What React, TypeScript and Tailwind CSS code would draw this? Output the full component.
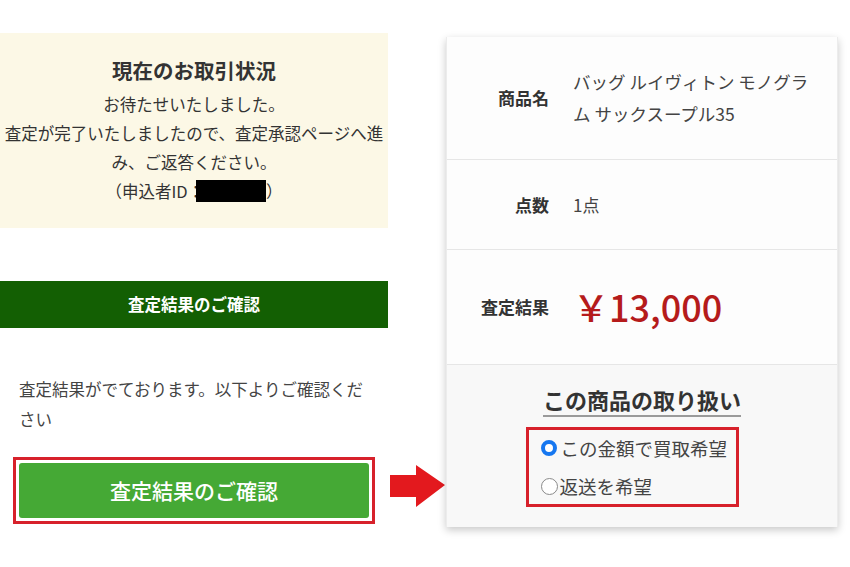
const font = { fontFamily: '"Noto Sans CJK JP", "Noto Sans", sans-serif' };

function Row({ label, children, className }: { label: string; children: React.ReactNode; className: string }) {
  return (
    <div className={`flex items-center border-b border-[#e6e6e6] ${className}`}>
      <div className="w-[102px] shrink-0 text-right text-[17px] font-bold text-[#333]">{label}</div>
      <div className="ml-[24px] w-[252px]">{children}</div>
    </div>
  );
}

export default function App() {
  return (
    <div className="w-[850px] h-[567px] bg-white flex items-start text-[#333]" style={font}>
      {/* left column */}
      <div className="w-[388px] shrink-0 pt-[33px]">
        <div className="h-[195px] bg-[#fcf8e6] flex flex-col items-center justify-center text-center">
          <h2 className="text-[20.5px] font-bold leading-[28px] mb-[6px]">現在のお取引状況</h2>
          <p className="text-[16.5px] leading-[29px]">お待たせいたしました。</p>
          <p className="text-[16.5px] leading-[29px] px-[3px]">
            査定が完了いたしましたので、査定承認ページへ進み、ご返答ください。
          </p>
          <p className="text-[16.5px] leading-[29px] flex items-center">
            （申込者ID：<span className="inline-block w-[70px] h-[22px] bg-black -ml-[8px]"></span>）
          </p>
        </div>

        <div className="mt-[53px] h-[47px] bg-[#135f03] flex items-center justify-center text-white text-[16.5px] font-bold">
          査定結果のご確認
        </div>

        <p className="mt-[46px] px-[19px] text-[16.5px] leading-[30px] text-[#444]">
          査定結果がでております。以下よりご確認ください
        </p>

        <div className="mt-[23px] ml-[13px] w-[362px] h-[67px] border-[3px] border-[#d7212b] p-[3px]">
          <div className="h-full bg-[#45a935] rounded-[3px] flex items-center justify-center text-white text-[21px] font-medium">
            査定結果のご確認
          </div>
        </div>
      </div>

      {/* arrow */}
      <div className="w-[58px] self-stretch flex flex-col justify-end pb-[60px] pl-[2px]">
        <svg width="56" height="42" viewBox="0 0 56 42">
          <path d="M0 10 H26 V0 L55 20 L26 42 V32 H0 Z" fill="#e3191e" />
        </svg>
      </div>

      {/* result card */}
      <div className="mt-[37px] w-[392px] bg-[#fdfdfd] shadow-[0_3px_8px_rgba(0,0,0,0.22)] border-x border-[#ececec]">
        <Row label="商品名" className="h-[123px]">
          <p className="text-[17.5px] leading-[32px] text-[#444]">バッグ ルイヴィトン モノグラム サックスープル35</p>
        </Row>
        <Row label="点数" className="h-[90px]">
          <p className="text-[17px] text-[#444]">1点</p>
        </Row>
        <Row label="査定結果" className="h-[115px]">
          <p className="text-[36px] leading-none text-[#b51b1b] font-medium -mt-[2px]">￥13,000</p>
        </Row>
        <div className="h-[162px] bg-[#f8f8f8] flex flex-col items-center pt-[19px]">
          <h3 className="text-[22px] font-bold leading-[30px] border-b-2 border-[#9a9a9a] pb-[1px]">この商品の取り扱い</h3>
          <div className="mt-[10px] -ml-[20px] w-[213px] h-[80px] border-[3px] border-[#d7212b] flex flex-col justify-center gap-[12px] pl-[12px]">
            <label className="flex items-center text-[18.5px] leading-[26px] text-[#444]">
              <span className="w-[16px] h-[16px] rounded-full border-[4.5px] border-[#1677f0] bg-white mr-[4px]"></span>
              この金額で買取希望
            </label>
            <label className="flex items-center text-[18.5px] leading-[26px] text-[#444]">
              <span className="w-[17px] h-[17px] rounded-full border-[1.5px] border-[#8a8a8a] bg-white mr-[2px]"></span>
              返送を希望
            </label>
          </div>
        </div>
      </div>
    </div>
  );
}
